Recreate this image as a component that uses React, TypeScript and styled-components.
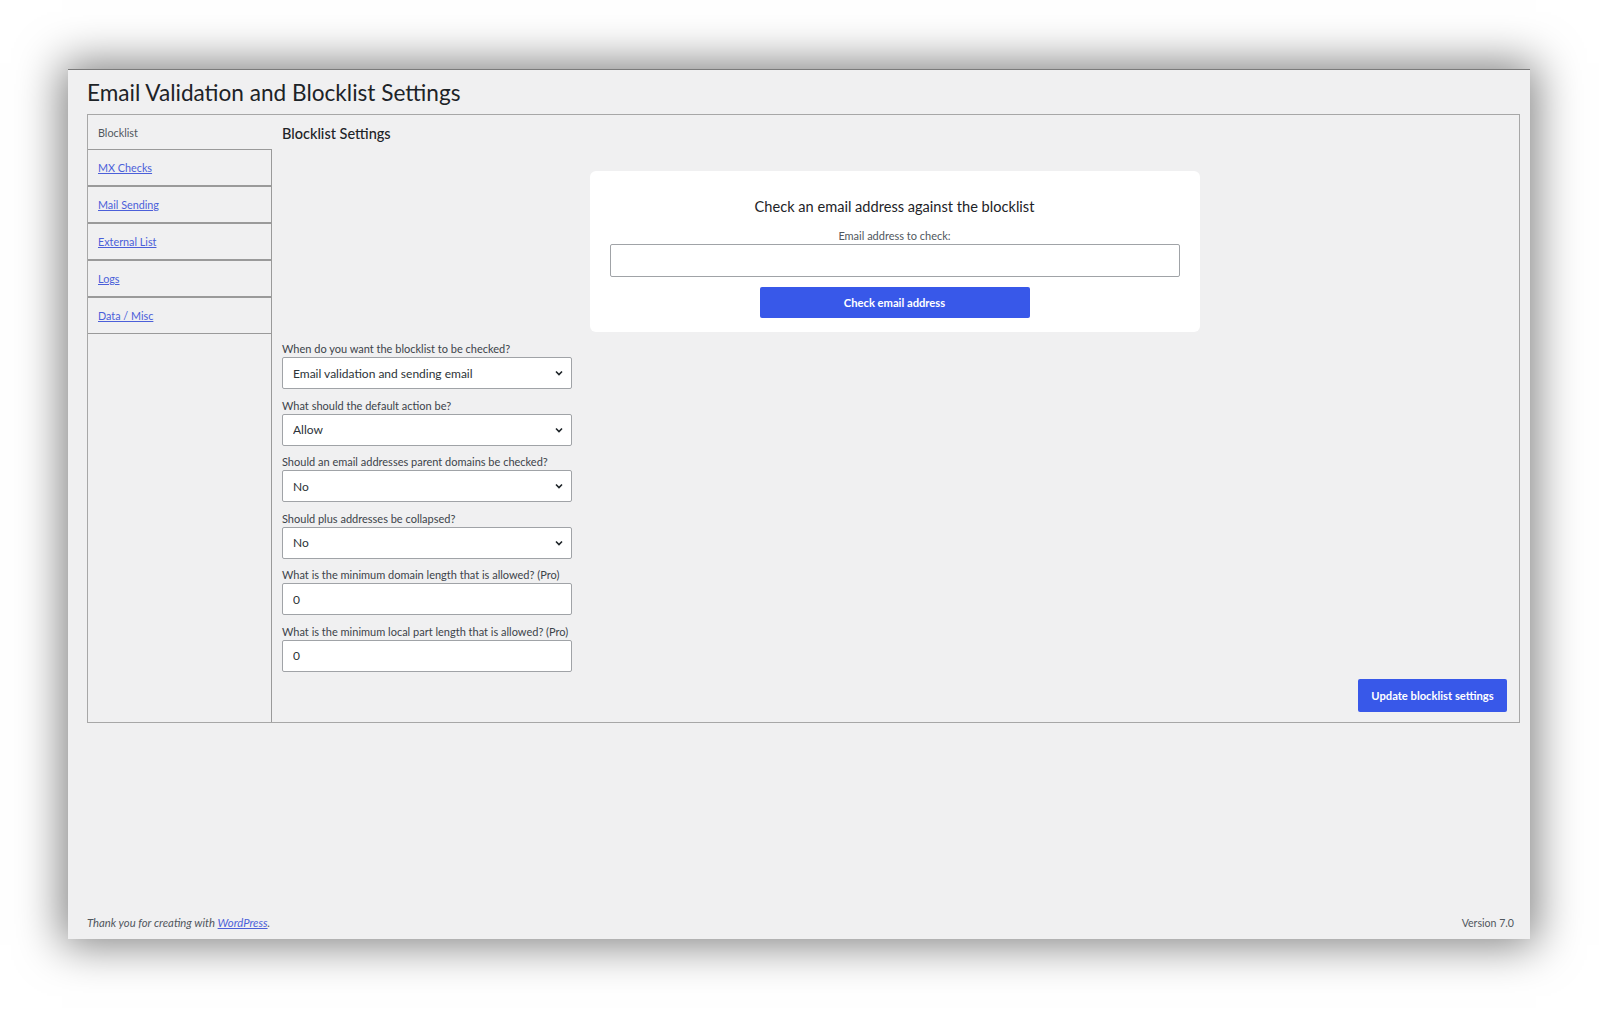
import React from 'react';
import styled, { createGlobalStyle } from 'styled-components';

const FONT = `Lato, "Noto Sans", sans-serif`;

const GlobalStyle = createGlobalStyle`
	html, body {
		margin: 0;
		padding: 0;
		background: #ffffff;
		height: 1009px;
		overflow: hidden;
	}
	* {
		box-sizing: border-box;
	}
`;

const SWindow = styled.div`
	margin: 69px 0 0 68px;
	width: 1462px;
	height: 870px;
	background: #f0f0f1;
	border-top: 1px solid #7a7a7a;
	box-shadow: 0 0 42px 6px rgba(0, 0, 0, 0.5);
	padding: 0 10px 0 19px;
	display: flex;
	flex-direction: column;
	font-family: ${FONT};
	color: #3c434a;
`;

const STitle = styled.h1`
	margin: 0;
	padding-top: 8px;
	font-size: 22.6px;
	line-height: 29px;
	font-weight: 400;
	color: #1d2327;
`;

const SBox = styled.div`
	margin-top: 7px;
	height: 609px;
	border: 1px solid #a7a7a7;
	display: flex;
`;

const SSidebar = styled.div`
	width: 184px;
	display: flex;
	flex-direction: column;
`;

const STab = styled.div<{ $active?: boolean }>`
	height: ${p => (p.$active ? '34px' : '37px')};
	display: flex;
	align-items: center;
	padding-left: 10px;
	font-size: 10.8px;
	color: #50575e;
	border-right: ${p => (p.$active ? 'none' : '1px solid #9a9a9a')};
	border-top: ${p => (p.$active ? 'none' : '1px solid #9a9a9a')};
	border-bottom: ${p => (p.$active ? 'none' : '1px solid #9a9a9a')};

	a {
		color: #4b5fd9;
		text-decoration: underline;
	}
`;

const SFiller = styled.div`
	flex: 1;
	border-right: 1px solid #9a9a9a;
`;

const SContent = styled.div`
	flex: 1;
	min-height: 0;
	padding: 9px 12px 10px 10px;
	display: flex;
	flex-direction: column;
`;

const SHeading = styled.h2`
	margin: 0;
	font-size: 14.5px;
	line-height: 20px;
	font-weight: 500;
	color: #1d2327;
`;

const SCard = styled.div`
	margin: 27px auto 0;
	width: 610px;
	background: #ffffff;
	border-radius: 6px;
	padding: 26px 20px 14px;
	display: flex;
	flex-direction: column;
	align-items: center;
`;

const SCardTitle = styled.h3`
	margin: 0;
	font-size: 14.6px;
	line-height: 20px;
	font-weight: 400;
	color: #1d2327;
`;

const SSmallLabel = styled.label`
	margin-top: 12px;
	font-size: 11px;
	line-height: 14px;
	color: #50575e;
`;

const STextInput = styled.input`
	display: block;
	width: 100%;
	height: 33px;
	border: 1px solid #a0a3a7;
	border-radius: 2px;
	background: #ffffff;
	padding: 0 10px;
	font-family: ${FONT};
	font-size: 12px;
	color: #2c3338;
	outline: none;
`;

const SButton = styled.button<{ $width: number }>`
	width: ${p => p.$width}px;
	height: 31px;
	border: none;
	border-radius: 2px;
	background: #3858e9;
	color: #ffffff;
	font-family: ${FONT};
	font-size: 11.2px;
	font-weight: 700;
	cursor: pointer;
`;

const SForm = styled.div`
	margin-top: 8px;
	width: 290px;
	display: flex;
	flex-direction: column;
	gap: 7.5px;
`;

const SField = styled.div`
	display: flex;
	flex-direction: column;
`;

const SFieldLabel = styled.label`
	font-size: 11px;
	line-height: 17px;
	white-space: nowrap;
	color: #3c434a;
`;

const SSelectWrap = styled.div`
	position: relative;
	height: 32px;

	svg {
		position: absolute;
		right: 8px;
		top: 11px;
		pointer-events: none;
	}
`;

const SSelect = styled.select`
	appearance: none;
	width: 100%;
	height: 32px;
	border: 1px solid #a0a3a7;
	border-radius: 2px;
	background: #ffffff;
	padding: 0 10px;
	font-family: ${FONT};
	font-size: 12px;
	color: #2c3338;
	outline: none;
`;

const SNumberInput = styled(STextInput)`
	height: 32px;
`;

const SActions = styled.div`
	margin-top: auto;
	display: flex;
	justify-content: flex-end;
`;

const SFooter = styled.div`
	margin-top: auto;
	padding: 0 6px 8px 0;
	display: flex;
	justify-content: space-between;
	font-size: 11.3px;
	line-height: 16px;
	color: #50575e;

	span {
		font-size: 10.6px;
	}

	em a {
		color: #4b5fd9;
	}
`;

const Chevron = () => (
	<svg width="10" height="10" viewBox="0 0 10 10">
		<path d="M2 3.5 L5 6.5 L8 3.5" fill="none" stroke="#1d2327" strokeWidth="1.6" />
	</svg>
);

type Field =
	| { kind: 'select'; label: string; value: string; options: string[] }
	| { kind: 'number'; label: string; value: string };

const fields: Field[] = [
	{
		kind: 'select',
		label: 'When do you want the blocklist to be checked?',
		value: 'Email validation and sending email',
		options: ['Email validation and sending email', 'Email validation only', 'Sending email only']
	},
	{ kind: 'select', label: 'What should the default action be?', value: 'Allow', options: ['Allow', 'Block'] },
	{
		kind: 'select',
		label: 'Should an email addresses parent domains be checked?',
		value: 'No',
		options: ['No', 'Yes']
	},
	{ kind: 'select', label: 'Should plus addresses be collapsed?', value: 'No', options: ['No', 'Yes'] },
	{ kind: 'number', label: 'What is the minimum domain length that is allowed? (Pro)', value: '0' },
	{ kind: 'number', label: 'What is the minimum local part length that is allowed? (Pro)', value: '0' }
];

const tabs = ['MX Checks', 'Mail Sending', 'External List', 'Logs', 'Data / Misc'];

const App: React.FC = () => {
	return (
		<>
			<GlobalStyle />
			<SWindow>
				<STitle>Email Validation and Blocklist Settings</STitle>
				<SBox>
					<SSidebar>
						<STab $active>Blocklist</STab>
						{tabs.map(t => (
							<STab key={t}>
								<a href="#">{t}</a>
							</STab>
						))}
						<SFiller />
					</SSidebar>
					<SContent>
						<SHeading>Blocklist Settings</SHeading>
						<SCard>
							<SCardTitle>Check an email address against the blocklist</SCardTitle>
							<SSmallLabel htmlFor="check-email">Email address to check:</SSmallLabel>
							<STextInput id="check-email" type="text" style={{ marginTop: 1 }} />
							<SButton $width={270} style={{ marginTop: 10 }}>
								Check email address
							</SButton>
						</SCard>
						<SForm>
							{fields.map(f => (
								<SField key={f.label}>
									<SFieldLabel>{f.label}</SFieldLabel>
									{f.kind === 'select' ? (
										<SSelectWrap>
											<SSelect defaultValue={f.value}>
												{f.options.map(o => (
													<option key={o}>{o}</option>
												))}
											</SSelect>
											<Chevron />
										</SSelectWrap>
									) : (
										<SNumberInput type="number" defaultValue={f.value} />
									)}
								</SField>
							))}
						</SForm>
						<SActions>
							<SButton $width={149} style={{ height: 33 }}>
								Update blocklist settings
							</SButton>
						</SActions>
					</SContent>
				</SBox>
				<SFooter>
					<em>
						Thank you for creating with <a href="#">WordPress</a>.
					</em>
					<span>Version 7.0</span>
				</SFooter>
			</SWindow>
		</>
	);
};

export default App;
